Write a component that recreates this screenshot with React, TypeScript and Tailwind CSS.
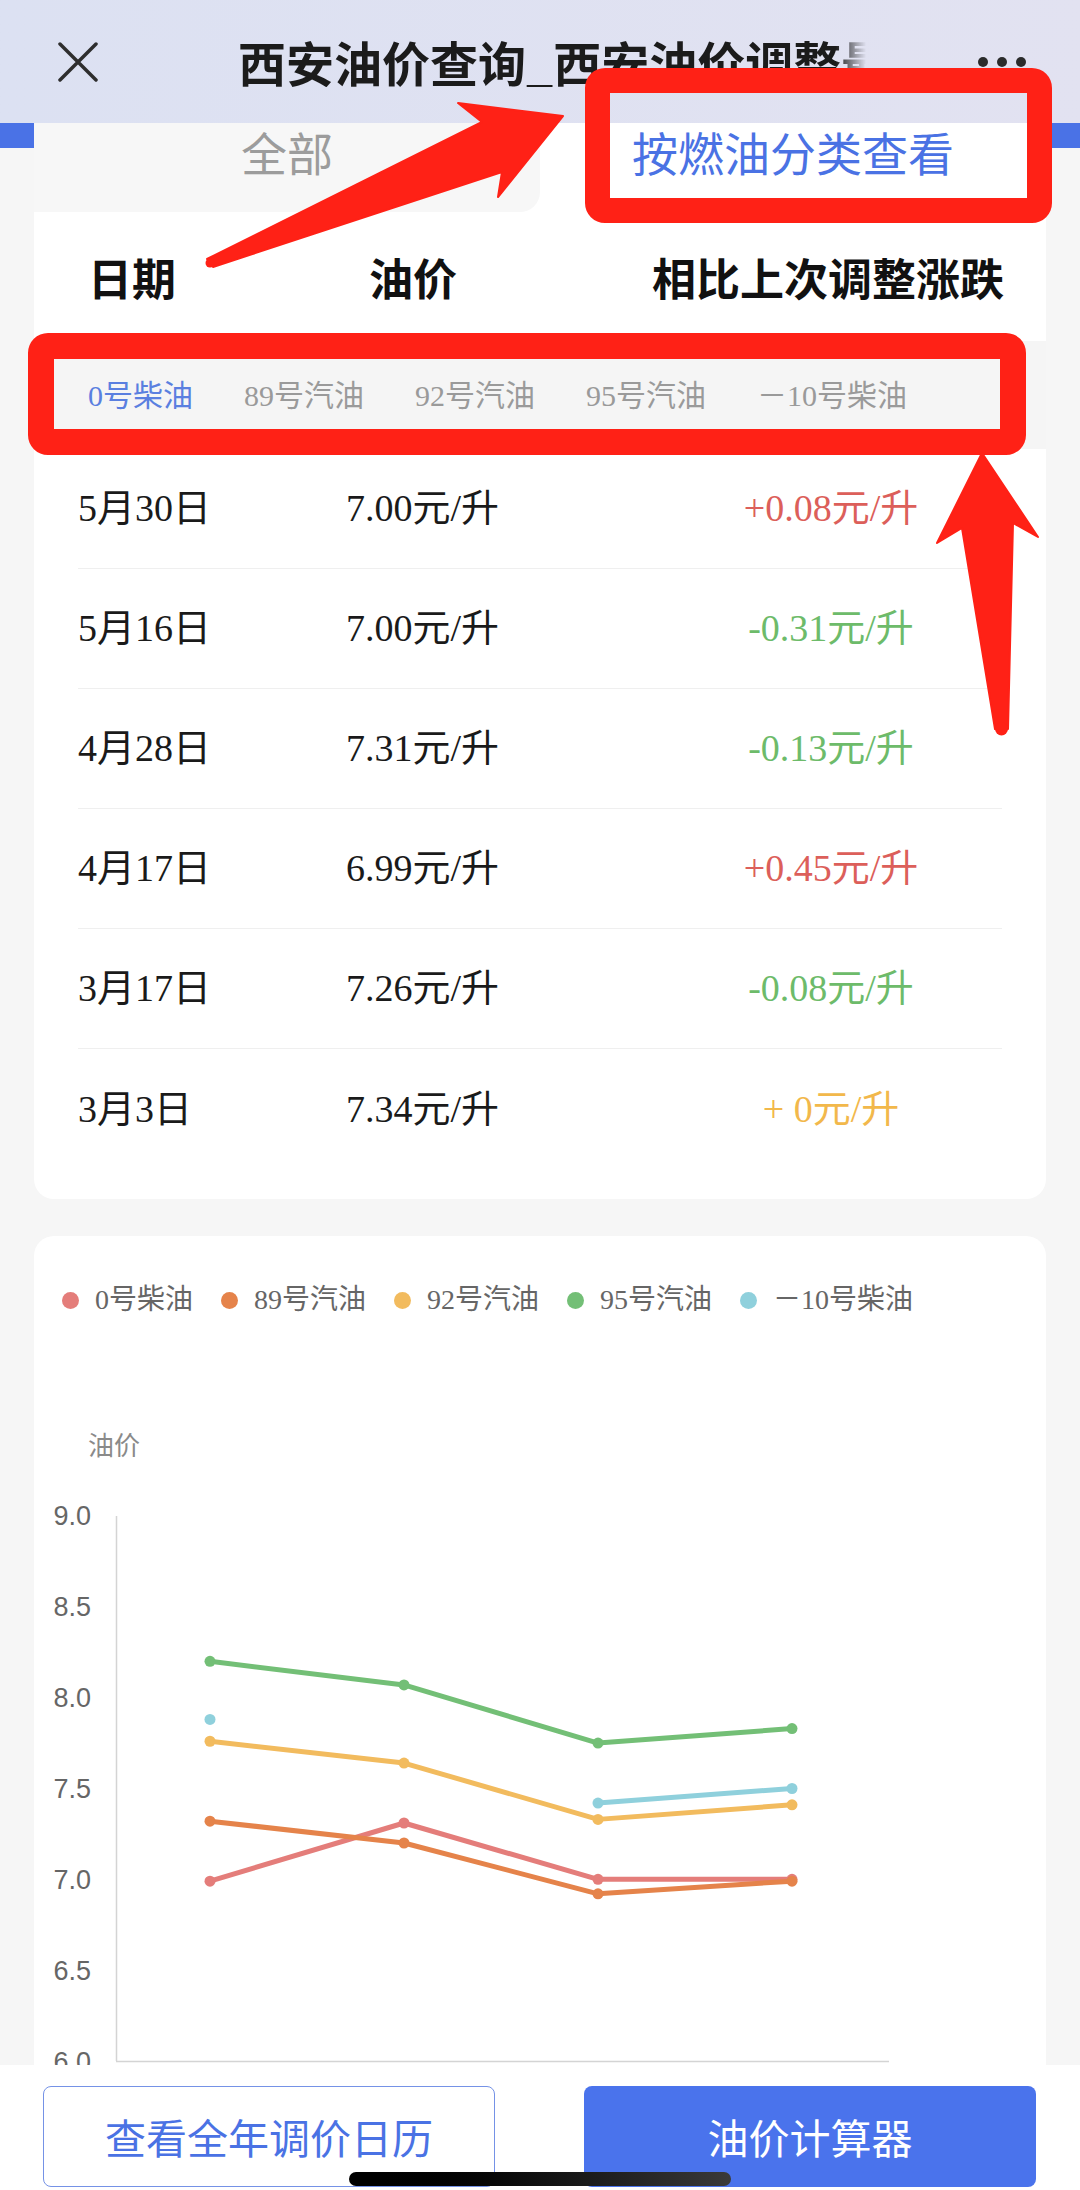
import React from 'react';

const rows = [
    { date: '5月30日', price: '7.00元/升', change: '+0.08元/升', color: 'text-[#dc5f5a]' },
    { date: '5月16日', price: '7.00元/升', change: '-0.31元/升', color: 'text-[#6dbb6a]' },
    { date: '4月28日', price: '7.31元/升', change: '-0.13元/升', color: 'text-[#6dbb6a]' },
    { date: '4月17日', price: '6.99元/升', change: '+0.45元/升', color: 'text-[#dc5f5a]' },
    { date: '3月17日', price: '7.26元/升', change: '-0.08元/升', color: 'text-[#6dbb6a]' },
    { date: '3月3日', price: '7.34元/升', change: '+ 0元/升', color: 'text-[#f2b84b]' },
];

const fuels = ['0号柴油', '89号汽油', '92号汽油', '95号汽油', '－10号柴油'];

// series order = draw order (later on top)
const series: { name: string; color: string; dot: string; values: (number | null)[] }[] = [
    { name: '0号柴油', color: '#e47d7a', dot: 'bg-[#e47d7a]', values: [6.99, 7.31, 7.0, 7.0] },
    { name: '89号汽油', color: '#e5834a', dot: 'bg-[#e5834a]', values: [7.32, 7.2, 6.92, 6.99] },
    { name: '92号汽油', color: '#f2bb5e', dot: 'bg-[#f2bb5e]', values: [7.76, 7.64, 7.33, 7.41] },
    { name: '95号汽油', color: '#73bf76', dot: 'bg-[#73bf76]', values: [8.2, 8.07, 7.75, 7.83] },
    { name: '－10号柴油', color: '#8fd0dc', dot: 'bg-[#8fd0dc]', values: [7.88, null, 7.42, 7.5] },
];

const xs = [210, 404, 598, 792];
const yOf = (v: number) => 2061 - (v - 6) * 181.67;

const Chart: React.FC = () => {
    const ticks = [9.0, 8.5, 8.0, 7.5, 7.0, 6.5, 6.0];
    return (
        <svg width={1012} height={810} viewBox="34 1380 1012 810" className="block">
            <text x={88} y={1455} fontSize={26} fill="#8a8a8a" fontFamily="'Noto Sans CJK SC', sans-serif">油价</text>
            {ticks.map((t) => (
                <text
                    key={t}
                    x={91}
                    y={yOf(t) + 9.5}
                    textAnchor="end"
                    fontSize={27}
                    fill="#666"
                    fontFamily="'Liberation Sans', sans-serif"
                >
                    {t.toFixed(1)}
                </text>
            ))}
            <line x1={116.5} y1={1516} x2={116.5} y2={2061} stroke="#d4d4d4" strokeWidth={1.5} />
            <line x1={116} y1={2061.5} x2={889} y2={2061.5} stroke="#d4d4d4" strokeWidth={1.5} />
            {series.map((s) => {
                const segs: string[] = [];
                let cur: string[] = [];
                s.values.forEach((v, i) => {
                    if (v == null) {
                        if (cur.length) segs.push(cur.join(' '));
                        cur = [];
                    } else {
                        cur.push(`${xs[i]},${yOf(v)}`);
                    }
                });
                if (cur.length) segs.push(cur.join(' '));
                return (
                    <g key={s.name}>
                        {segs.filter((p) => p.includes(' ')).map((p, i) => (
                            <polyline
                                key={i}
                                points={p}
                                fill="none"
                                stroke={s.color}
                                strokeWidth={5}
                                strokeLinejoin="round"
                                strokeLinecap="round"
                            />
                        ))}
                        {s.values.map((v, i) =>
                            v == null ? null : <circle key={i} cx={xs[i]} cy={yOf(v)} r={5.5} fill={s.color} />
                        )}
                    </g>
                );
            })}
        </svg>
    );
};

export default function App() {
    return (
        <div className="relative w-[1080px] h-[2190px] overflow-hidden bg-[#f6f6f6] font-['Noto_Sans_CJK_SC',sans-serif]">
            {/* header */}
            <div className="h-[123px] bg-gradient-to-r from-[#dce1f2] to-[#e2e2f1] flex items-center pl-[58px]">
                <svg width="40" height="40" viewBox="0 0 40 40" className="shrink-0">
                    <path d="M2 2 L38 38 M38 2 L2 38" stroke="#2e2e2e" strokeWidth="3.5" strokeLinecap="round" />
                </svg>
                <div className="ml-[140px] w-[630px] overflow-hidden whitespace-nowrap [mask-image:linear-gradient(to_right,#000_598px,transparent_628px)]">
                    <span className="text-[48px] font-semibold text-[#1b1b1b] leading-none">西安油价查询_西安油价调整最新消息</span>
                </div>
                <div className="ml-[110px] flex gap-[9px]">
                    <span className="w-[10px] h-[10px] rounded-full bg-[#2b2b2b]" />
                    <span className="w-[10px] h-[10px] rounded-full bg-[#2b2b2b]" />
                    <span className="w-[10px] h-[10px] rounded-full bg-[#2b2b2b]" />
                </div>
            </div>
            <div className="h-[25px] bg-[#4a72e6]" />

            {/* table card */}
            <div className="-mt-[25px] mx-[34px] bg-white rounded-b-[20px] pb-[30px]">
                <div className="flex h-[89px]">
                    <div className="w-[506px] bg-[#f7f7f7] rounded-br-[20px] flex justify-center">
                        <span className="text-[46px] leading-[56px] text-[#9c9c9c]">全部</span>
                    </div>
                    <div className="flex-1 flex justify-center">
                        <span className="text-[46px] leading-[56px] text-[#4a72e4]">按燃油分类查看</span>
                    </div>
                </div>
                <div className="h-[129px] flex items-center pl-[54px] text-[44px] font-bold text-[#111]">
                    <span className="w-[281px]">日期</span>
                    <span className="w-[283px]">油价</span>
                    <span>相比上次调整涨跌</span>
                </div>
                <div className="h-[108px] bg-[#f5f5f5] flex items-center pl-[54px] gap-[51px] text-[30px] font-['Liberation_Serif','Noto_Sans_CJK_SC',serif]">
                    {fuels.map((f, i) => (
                        <span key={f} className={i === 0 ? 'text-[#5a7fe0]' : 'text-[#9a9a9a]'}>
                            {f}
                        </span>
                    ))}
                </div>
                <div className="px-[44px] font-['Liberation_Serif','Noto_Sans_CJK_SC',serif] text-[38px]">
                    {rows.map((r, i) => (
                        <div
                            key={r.date}
                            className={`h-[120px] flex items-center ${i < rows.length - 1 ? 'border-b border-[#efefef]' : ''}`}
                        >
                            <span className="w-[268px] shrink-0 text-[#1a1a1a]">{r.date}</span>
                            <span className="w-[314px] shrink-0 text-[#1a1a1a]">{r.price}</span>
                            <span className={`w-[342px] shrink-0 text-center whitespace-pre ${r.color}`}>{r.change}</span>
                        </div>
                    ))}
                </div>
            </div>

            {/* chart card */}
            <div className="mt-[37px] mx-[34px] bg-white rounded-t-[20px] pt-[50px]">
                <div className="h-[28px] flex items-center pl-[28px] gap-[28px] text-[28px] text-[#666] font-['Liberation_Serif','Noto_Sans_CJK_SC',serif]">
                    {series.map((s) => (
                        <div key={s.name} className="flex items-center gap-[16px]">
                            <span className={`w-[17px] h-[17px] rounded-full ${s.dot}`} />
                            <span className="leading-none">{s.name}</span>
                        </div>
                    ))}
                </div>
                <div className="mt-[66px]">
                    <Chart />
                </div>
            </div>

            {/* bottom bar */}
            <div className="absolute left-0 right-0 bottom-0 h-[125px] bg-white flex justify-between pl-[43px] pr-[44px] pt-[21px]">
                <button className="w-[452px] h-[101px] rounded-[8px] border-[1.5px] border-[#7592e6] text-[41px] text-[#4a72e4] bg-white">
                    查看全年调价日历
                </button>
                <button className="w-[452px] h-[101px] rounded-[8px] bg-[#4a73ec] text-[41px] text-white">
                    油价计算器
                </button>
            </div>
            <div className="absolute left-[349px] top-[2172px] w-[382px] h-[14px] rounded-full bg-gradient-to-r from-black via-[#111] to-[#3a3a3a]" />

            {/* red annotations */}
            <div className="absolute left-[585px] top-[68px] w-[467px] h-[155px] border-[25px] border-[#ff2116] rounded-[20px] pointer-events-none" />
            <div className="absolute left-[28px] top-[333px] w-[998px] h-[122px] border-[26px] border-[#ff2116] rounded-[20px] pointer-events-none" />
            <svg className="absolute left-0 top-0 pointer-events-none" width={1080} height={2190}>
                <path
                    d="M207 259 L482 122 L458 103 L563 116 L498 197 L502 172 L213 267 Z"
                    fill="#ff2116"
                    stroke="#ff2116"
                    strokeWidth={2}
                    strokeLinejoin="round"
                />
                <circle cx={210} cy={263} r={4.5} fill="#ff2116" />
                <path
                    d="M982 453 L1038 537 L1013 523 L1008 729 L995 729 L962 528 L937 543 Z"
                    fill="#ff2116"
                    stroke="#ff2116"
                    strokeWidth={2}
                    strokeLinejoin="round"
                />
                <circle cx={1001.5} cy={729} r={6.5} fill="#ff2116" />
            </svg>
        </div>
    );
}
